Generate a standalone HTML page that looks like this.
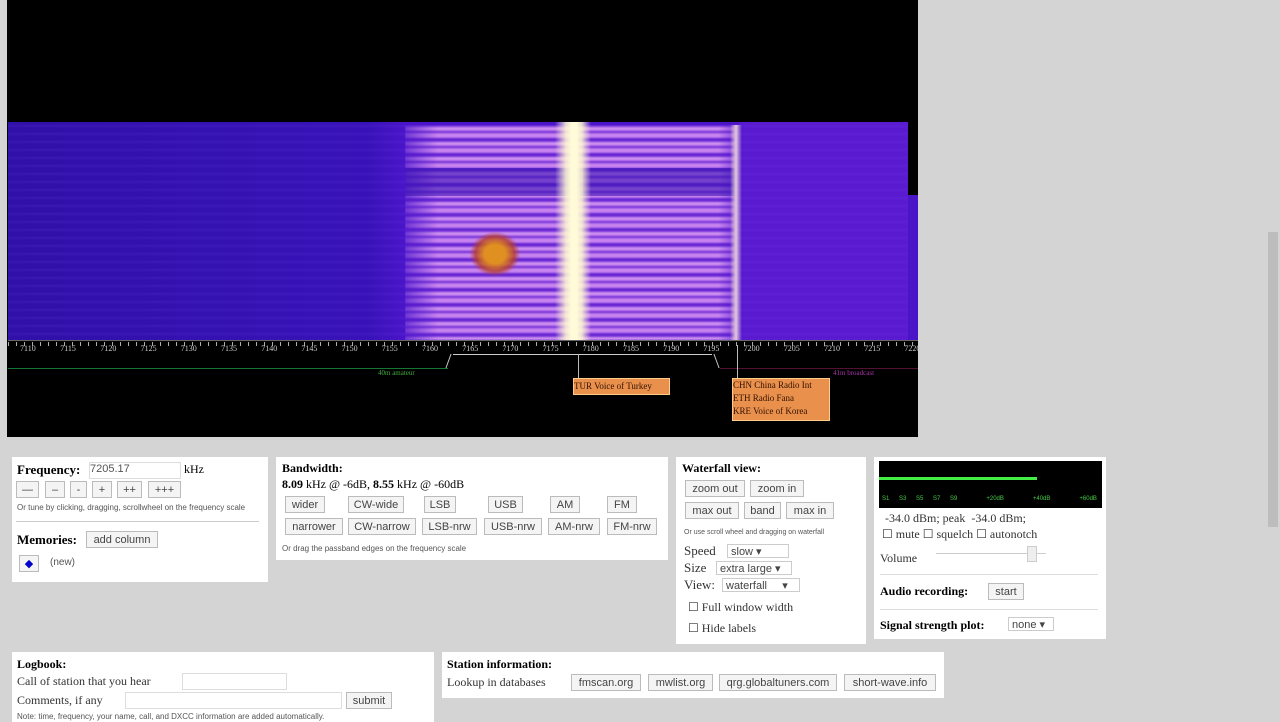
<!DOCTYPE html><html><head><style>
body{margin:0;width:1280px;height:720px;background:#d4d4d4;font-family:"Liberation Serif",serif;position:relative;overflow:hidden}
.a{position:absolute}
.p{position:absolute;background:#fff}
.b{position:absolute;border:1px solid #bbb;background:#f4f4f4;font:11px "Liberation Sans",sans-serif;color:#444;text-align:center;height:17px;line-height:17px;box-sizing:border-box}
.s{font-size:8px;color:#555;font-family:"Liberation Sans",sans-serif}
b{font-weight:bold}
.t{position:absolute;font-size:8px;color:#ccc;font-family:"Liberation Serif",serif}
.sel{position:absolute;border:1px solid #ccc;font:11px "Liberation Sans",sans-serif;color:#444;height:14px;line-height:14px;padding-left:3px;box-sizing:border-box}
</style></head><body>
<div class="a" style="left:7px;top:0;width:911px;height:437px;background:#000"></div>
<div class="a" style="left:8px;top:122px;width:900px;height:218px;background:
repeating-linear-gradient(0deg,rgba(0,0,0,0) 0,rgba(0,0,0,0) 4px,rgba(120,80,255,.12) 6px,rgba(0,0,0,0) 8px),
linear-gradient(90deg,#3010a8 0%,#3812b8 40%,#4a14c8 44%,#4a14c8 80%,#5a1ad0 82%,#5a1ad0 100%)"></div>
<div class="a" style="left:908px;top:195px;width:10px;height:145px;background:#4a14c8"></div>
<div class="a" style="left:405px;top:125px;width:330px;height:215px;filter:blur(0.8px);background:
repeating-linear-gradient(0deg,rgba(235,160,250,.8) 0,rgba(245,190,250,.8) 2px,rgba(150,60,230,.5) 4px,rgba(110,40,210,.45) 6px,rgba(235,160,250,.8) 8px,rgba(240,170,250,.75) 11px,rgba(130,50,220,.5) 13px,rgba(235,160,250,.8) 15px);
-webkit-mask-image:linear-gradient(90deg,rgba(0,0,0,.3) 0,#000 10%,#000 95%,rgba(0,0,0,.5) 100%)"></div>
<div class="a" style="left:405px;top:168px;width:330px;height:28px;background:rgba(60,20,180,.6)"></div>
<div class="a" style="left:555px;top:122px;width:36px;height:218px;background:linear-gradient(90deg,rgba(255,250,210,0),rgba(255,250,210,.85) 30%,#fffbd8 45%,#fffbd8 60%,rgba(255,250,210,.85) 75%,rgba(255,250,210,0))"></div>
<div class="a" style="left:730px;top:125px;width:12px;height:215px;background:linear-gradient(90deg,rgba(255,230,220,0),rgba(255,235,220,.85),rgba(255,230,220,0))"></div>
<div class="a" style="left:470px;top:232px;width:50px;height:44px;border-radius:50%;background:radial-gradient(#e09020 30%,rgba(180,60,40,.8) 55%,rgba(200,80,40,0) 72%)"></div>
<div class="a" style="left:8px;top:340px;width:910px;height:1px;background:#666"></div>
<div class="a" style="left:8px;top:342px;width:910px;height:4px;background:repeating-linear-gradient(90deg,#aaa 0,#aaa 1px,transparent 1px,transparent 8px)"></div>
<div id="sc"></div>
<div class="a" style="left:8px;top:368px;width:440px;height:1px;background:#173"></div>
<div class="a" style="left:720px;top:368px;width:198px;height:1px;background:#513"></div>
<div class="t" style="left:378px;top:369px;color:#4a4;font-size:7px">40m amateur</div>
<div class="t" style="left:833px;top:369px;color:#a3a;font-size:7px">41m broadcast</div>
<div class="a" style="left:453px;top:354px;width:259px;height:1px;background:#ccc"></div>
<div class="a" style="left:448px;top:354px;width:1px;height:14px;background:#ccc;transform:skewX(-20deg)"></div>
<div class="a" style="left:716px;top:354px;width:1px;height:14px;background:#ccc;transform:skewX(20deg)"></div>
<div class="a" style="left:578px;top:354px;width:1px;height:24px;background:#bbb"></div>
<div class="a" style="left:737px;top:345px;width:1px;height:33px;background:#bbb"></div>
<div class="a" style="left:573px;top:378px;width:95px;height:15px;background:#e8904c;border:1px solid #fc8;font-size:9px;color:#310;line-height:14px">TUR Voice of Turkey</div>
<div class="a" style="left:732px;top:378px;width:96px;height:41px;background:#e8904c;border:1px solid #fc8;font-size:9px;color:#310;line-height:13px">CHN China Radio Int<br>ETH Radio Fana<br>KRE Voice of Korea</div>

<div class="p" style="left:12px;top:457px;width:256px;height:125px"></div>
<div class="a" style="left:17px;top:462px;font-size:13px"><b>Frequency:</b></div>
<div class="a" style="left:89px;top:462px;width:90px;height:15px;border:1px solid #ddd;font:11px 'Liberation Sans';color:#555">7205.17</div>
<div class="a" style="left:184px;top:462px;font-size:12px">kHz</div>
<div class="b" style="left:16px;top:481px;width:23px">—</div>
<div class="b" style="left:45px;top:481px;width:20px">–</div>
<div class="b" style="left:70px;top:481px;width:17px">-</div>
<div class="b" style="left:92px;top:481px;width:20px">+</div>
<div class="b" style="left:117px;top:481px;width:25px">++</div>
<div class="b" style="left:148px;top:481px;width:33px">+++</div>
<div class="a s" style="left:17px;top:503px">Or tune by clicking, dragging, scrollwheel on the frequency scale</div>
<div class="a" style="left:16px;top:521px;width:243px;height:1px;background:#ccc"></div>
<div class="a" style="left:17px;top:532px;font-size:13px"><b>Memories:</b></div>
<div class="b" style="left:86px;top:531px;width:72px">add column</div>
<div class="b" style="left:19px;top:555px;width:20px;color:#00c">◆</div>
<div class="a" style="left:50px;top:557px;font:10px 'Liberation Sans';color:#555">(new)</div>

<div class="p" style="left:276px;top:457px;width:392px;height:103px"></div>
<div class="a" style="left:282px;top:461px;font-size:12px"><b>Bandwidth:</b></div>
<div class="a" style="left:282px;top:477px;font-size:12px"><b>8.09</b> kHz @ -6dB, <b>8.55</b> kHz @ -60dB</div>
<div class="b" style="left:285px;top:496px;width:40px">wider</div>
<div class="b" style="left:348px;top:496px;width:56px">CW-wide</div>
<div class="b" style="left:424px;top:496px;width:32px">LSB</div>
<div class="b" style="left:488px;top:496px;width:35px">USB</div>
<div class="b" style="left:550px;top:496px;width:30px">AM</div>
<div class="b" style="left:607px;top:496px;width:30px">FM</div>
<div class="b" style="left:285px;top:518px;width:58px">narrower</div>
<div class="b" style="left:348px;top:518px;width:68px">CW-narrow</div>
<div class="b" style="left:422px;top:518px;width:55px">LSB-nrw</div>
<div class="b" style="left:484px;top:518px;width:58px">USB-nrw</div>
<div class="b" style="left:548px;top:518px;width:52px">AM-nrw</div>
<div class="b" style="left:607px;top:518px;width:50px">FM-nrw</div>
<div class="a s" style="left:282px;top:544px">Or drag the passband edges on the frequency scale</div>

<div class="p" style="left:676px;top:457px;width:190px;height:187px"></div>
<div class="a" style="left:682px;top:461px;font-size:12px"><b>Waterfall view:</b></div>
<div class="b" style="left:685px;top:480px;width:60px">zoom out</div>
<div class="b" style="left:750px;top:480px;width:54px">zoom in</div>
<div class="b" style="left:685px;top:502px;width:54px">max out</div>
<div class="b" style="left:744px;top:502px;width:37px">band</div>
<div class="b" style="left:786px;top:502px;width:48px">max in</div>
<div class="a s" style="left:684px;top:529px;font-size:7px">Or use scroll wheel and dragging on waterfall</div>
<div class="a" style="left:684px;top:543px;font-size:13px;color:#333">Speed</div>
<div class="sel" style="left:727px;top:544px;width:62px">slow ▾</div>
<div class="a" style="left:684px;top:560px;font-size:13px;color:#333">Size</div>
<div class="sel" style="left:716px;top:561px;width:76px">extra large ▾</div>
<div class="a" style="left:684px;top:577px;font-size:13px;color:#333">View:</div>
<div class="sel" style="left:722px;top:578px;width:78px">waterfall &nbsp; &nbsp; ▾</div>
<div class="a" style="left:688px;top:600px;font-size:12px;color:#333">☐ Full window width</div>
<div class="a" style="left:688px;top:621px;font-size:12px;color:#333">☐ Hide labels</div>

<div class="p" style="left:874px;top:457px;width:232px;height:182px"></div>
<div class="a" style="left:879px;top:461px;width:223px;height:47px;background:#000"></div>
<div class="a" style="left:879px;top:477px;width:158px;height:3px;background:#4e4"></div>
<div class="a" style="left:882px;top:496px;font:6px 'Liberation Sans';color:#4c4;word-spacing:8px">S1 S3 S5 S7 S9 &nbsp; +20dB &nbsp; +40dB &nbsp; +60dB</div>
<div class="a" style="left:885px;top:511px;font-size:12px;color:#333">-34.0 dBm; peak &nbsp;-34.0 dBm;</div>
<div class="a" style="left:882px;top:527px;font-size:12px;color:#333">☐ mute ☐ squelch ☐ autonotch</div>
<div class="a" style="left:880px;top:551px;font-size:12px;color:#333">Volume</div>
<div class="a" style="left:936px;top:553px;width:110px;height:1px;background:#ccc"></div>
<div class="a" style="left:1027px;top:546px;width:8px;height:14px;border:1px solid #ccc;background:#eee"></div>
<div class="a" style="left:880px;top:574px;width:218px;height:1px;background:#ddd"></div>
<div class="a" style="left:880px;top:584px;font-size:12px"><b>Audio recording:</b></div>
<div class="b" style="left:988px;top:583px;width:36px">start</div>
<div class="a" style="left:880px;top:609px;width:218px;height:1px;background:#ddd"></div>
<div class="a" style="left:880px;top:618px;font-size:12px"><b>Signal strength plot:</b></div>
<div class="sel" style="left:1008px;top:617px;width:46px">none ▾</div>

<div class="p" style="left:12px;top:652px;width:422px;height:70px"></div>
<div class="a" style="left:17px;top:657px;font-size:12px"><b>Logbook:</b></div>
<div class="a" style="left:17px;top:674px;font-size:12px;color:#333">Call of station that you hear</div>
<div class="a" style="left:182px;top:673px;width:103px;height:15px;border:1px solid #ddd"></div>
<div class="a" style="left:17px;top:693px;font-size:12px;color:#333">Comments, if any</div>
<div class="a" style="left:125px;top:692px;width:215px;height:15px;border:1px solid #ddd"></div>
<div class="b" style="left:346px;top:692px;width:46px">submit</div>
<div class="a s" style="left:17px;top:712px">Note: time, frequency, your name, call, and DXCC information are added automatically.</div>

<div class="p" style="left:442px;top:652px;width:502px;height:46px"></div>
<div class="a" style="left:447px;top:657px;font-size:12px"><b>Station information:</b></div>
<div class="a" style="left:447px;top:675px;font-size:12px;color:#333">Lookup in databases</div>
<div class="b" style="left:571px;top:674px;width:70px">fmscan.org</div>
<div class="b" style="left:648px;top:674px;width:65px">mwlist.org</div>
<div class="b" style="left:719px;top:674px;width:118px">qrg.globaltuners.com</div>
<div class="b" style="left:844px;top:674px;width:92px">short-wave.info</div>

<div class="a" style="left:1268px;top:232px;width:10px;height:295px;background:#bdbdbd"></div>
<script>
var h='';for(var i=0;i<=22;i++){h+='<div class="t" style="left:'+(20+i*40.2)+'px;top:344px">'+(7110+i*5)+'</div>';}
document.getElementById('sc').innerHTML=h;
</script>
</body></html>
